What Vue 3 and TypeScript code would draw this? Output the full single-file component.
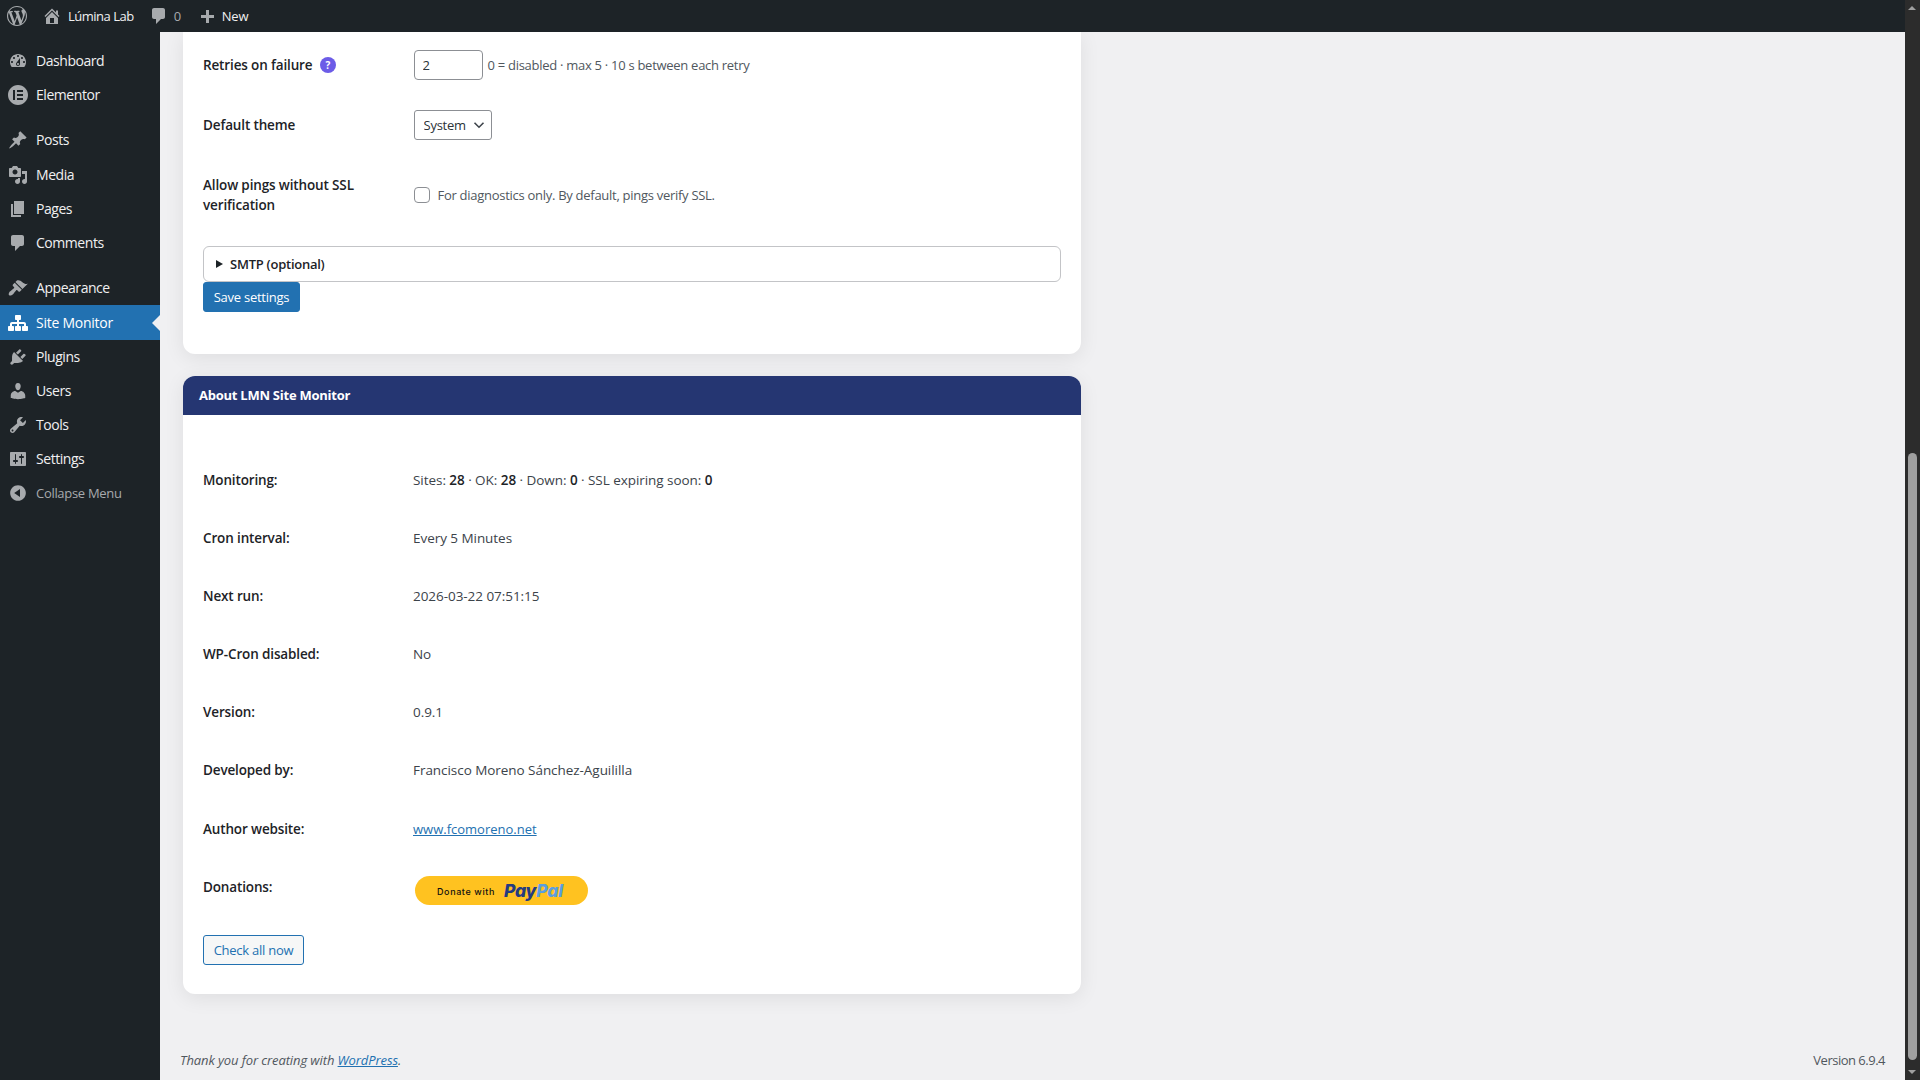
<script setup lang="ts">
interface MenuItem { label: string; d: string; gapBefore?: boolean; current?: boolean; dim?: boolean }

const paths = {
  dashboard: 'M3.76 16h12.48c1.1-1.37 1.76-3.11 1.76-5 0-4.42-3.58-8-8-8s-8 3.58-8 8c0 1.89.66 3.63 1.76 5zM10 4c.55 0 1 .45 1 1s-.45 1-1 1-1-.45-1-1 .45-1 1-1zM6 6c.55 0 1 .45 1 1s-.45 1-1 1-1-.45-1-1 .45-1 1-1zm8 0c.55 0 1 .45 1 1s-.45 1-1 1-1-.45-1-1 .45-1 1-1zm-5.37 5.55L12 7v6c0 1.1-.9 2-2 2s-2-.9-2-2c0-.57.24-1.08.63-1.45zM4 10c.55 0 1 .45 1 1s-.45 1-1 1-1-.45-1-1 .45-1 1-1zm12 0c.55 0 1 .45 1 1s-.45 1-1 1-1-.45-1-1 .45-1 1-1zm-5 3c0-.55-.45-1-1-1s-1 .45-1 1 .45 1 1 1 1-.45 1-1z',
  elementor: 'M10 0C4.478 0 0 4.478 0 10s4.478 10 10 10 10-4.478 10-10S15.522 0 10 0zM7 15H5V5h2v10zm8 0H9v-2h6v2zm0-4H9V9h6v2zm0-4H9V5h6v2z',
  post: 'M10.44 3.02l1.82-1.82 6.36 6.35-1.83 1.82c-1.05-.68-2.48-.57-3.41.36l-.75.75c-.92.93-1.04 2.35-.35 3.41l-1.83 1.82-2.41-2.41-2.8 2.79c-.42.42-3.38 2.71-3.8 2.29s1.86-3.39 2.28-3.81l2.79-2.79L4.1 9.36l1.83-1.82c1.05.69 2.48.57 3.4-.36l.75-.75c.93-.92 1.05-2.35.36-3.41z',
  media: 'M13 11V4c0-.55-.45-1-1-1h-1.67L9 1H5L3.67 3H2c-.55 0-1 .45-1 1v7c0 .55.45 1 1 1h10c.55 0 1-.45 1-1zM7 4.5c1.38 0 2.5 1.12 2.5 2.5S8.38 9.5 7 9.5 4.5 8.38 4.5 7 5.62 4.5 7 4.5zM14 6h5v10.5c0 1.38-1.12 2.5-2.5 2.5S14 17.88 14 16.5s1.12-2.5 2.5-2.5c.17 0 .34.02.5.05V9h-3V6zm-4 8.05V13h2v3.5c0 1.38-1.12 2.5-2.5 2.5S7 17.88 7 16.5 8.12 14 9.5 14c.17 0 .34.02.5.05z',
  page: 'M6 15V2h10v13H6zm-1 1h8v2H3V5h2v11z',
  comment: 'M5 2h9c1.1 0 2 .9 2 2v7c0 1.1-.9 2-2 2h-2l-5 5v-5H5c-1.1 0-2-.9-2-2V4c0-1.1.9-2 2-2z',
  appearance: 'M14.48 11.06L7.41 3.99l1.5-1.5c.5-.56 2.3-.47 3.51.32 1.21.8 1.43 1.28 2.91 2.1 1.18.64 2.45 1.26 4.45.85zm-.71.71L6.7 4.7 4.93 6.47c-.39.39-.39 1.02 0 1.41l1.06 1.06c.39.39.39 1.03 0 1.42-.6.6-1.43 1.11-2.21 1.69-.35.26-.7.53-1.01.84C1.43 13.23.1 15.79 1.1 17.34c1.63.69 3.11-.32 4.45-1.71.3-.31.57-.66.83-1.01.58-.78 1.09-1.61 1.69-2.21.39-.39 1.02-.39 1.41 0l1.06 1.06c.39.39 1.02.39 1.41 0z',
  network: 'M18 13h1c.55 0 1 .45 1 1.01v2.98c0 .56-.45 1.01-1 1.01h-4c-.55 0-1-.45-1-1.01v-2.98c0-.56.45-1.01 1-1.01h1v-2h-5v2h1c.55 0 1 .45 1 1.01v2.98c0 .56-.45 1.01-1 1.01H8c-.55 0-1-.45-1-1.01v-2.98c0-.56.45-1.01 1-1.01h1v-2H4v2h1c.55 0 1 .45 1 1.01v2.98C6 17.55 5.55 18 5 18H1c-.55 0-1-.45-1-1.01v-2.98C0 13.45.45 13 1 13h1v-2c0-1.1.9-2 2-2h5V7H8c-.55 0-1-.45-1-1.01V3.01C7 2.45 7.45 2 8 2h4c.55 0 1 .45 1 1.01v2.98C13 6.55 12.55 7 12 7h-1v2h5c1.1 0 2 .9 2 2v2z',
  plugins: 'M13.11 4.36L9.87 7.6 8 5.73l3.24-3.24c.35-.34 1.05-.2 1.56.32.52.51.66 1.21.31 1.55zm-8 1.77l.91-1.12 9.01 9.01-1.19.84c-.71.71-2.63 1.16-3.82 1.16H6.14L4.9 17.26c-.59.59-1.54.59-2.12 0-.59-.58-.59-1.53 0-2.12l1.24-1.24v-3.88c0-1.13.4-3.19 1.09-3.89zm7.26 3.97l3.24-3.24c.34-.35 1.04-.21 1.55.31.52.51.66 1.21.31 1.55l-3.24 3.25z',
  users: 'M10 9.25c-2.27 0-2.73-3.44-2.73-3.44C7 4.02 7.82 2 9.97 2c2.16 0 2.98 2.02 2.71 3.81 0 0-.41 3.44-2.68 3.44zm0 2.57L12.72 10c2.39 0 4.52 2.33 4.52 4.53v2.49s-3.65 1.13-7.24 1.13c-3.65 0-7.24-1.13-7.24-1.13v-2.49c0-2.25 1.94-4.48 4.47-4.48z',
  tools: 'M16.68 9.77c-1.34 1.34-3.3 1.67-4.95.99l-5.41 6.52c-.99.99-2.59.99-3.58 0s-.99-2.59 0-3.57l6.52-5.42c-.68-1.65-.35-3.61.99-4.95 1.28-1.28 3.12-1.62 4.72-1.06l-2.89 2.89 2.82 2.82 2.86-2.87c.53 1.58.18 3.39-1.08 4.65zM3.81 16.21c.4.39 1.04.39 1.43 0 .4-.4.4-1.04 0-1.43-.39-.4-1.03-.4-1.43 0-.39.39-.39 1.03 0 1.43z',
  settings: 'M18 16V4c0-.55-.45-1-1-1H3c-.55 0-1 .45-1 1v12c0 .55.45 1 1 1h14c.55 0 1-.45 1-1zM8 11h1c.55 0 1 .45 1 1s-.45 1-1 1H8v1.5c0 .28-.22.5-.5.5s-.5-.22-.5-.5V13H6c-.55 0-1-.45-1-1s.45-1 1-1h1V5.5c0-.28.22-.5.5-.5s.5.22.5.5V11zm5-2h-1c-.55 0-1-.45-1-1s.45-1 1-1h1V5.5c0-.28.22-.5.5-.5s.5.22.5.5V7h1c.55 0 1 .45 1 1s-.45 1-1 1h-1v5.5c0 .28-.22.5-.5.5s-.5-.22-.5-.5V9z',
  collapse: 'M10 2.16c4.33 0 7.84 3.51 7.84 7.84s-3.51 7.84-7.84 7.84S2.16 14.33 2.16 10 5.71 2.16 10 2.16zm2 11.72V6.12L6.18 9.97z',
  home: 'M16 8.5l1.53 1.53-1.06 1.06L10 4.62l-6.47 6.47-1.06-1.06L10 2.5l4 4v-2h2v4zm-6-2.46l6 5.99V18H4v-5.97zM12 17v-5H8v5h4z',
  plus: 'M17 9v3h-5v5H9v-5H4V9h5V4h3v5h5z',
  wp: 'M20 10c0-5.51-4.49-10-10-10C4.48 0 0 4.49 0 10c0 5.52 4.48 10 10 10 5.51 0 10-4.48 10-10zM7.78 15.37L4.37 6.22c.55-.02 1.17-.08 1.17-.08.5-.06.44-1.13-.06-1.11 0 0-1.45.11-2.37.11-.18 0-.37 0-.58-.01C4.12 2.69 6.87 1.11 10 1.11c2.33 0 4.45.87 6.05 2.34-.68-.11-1.65.39-1.65 1.58 0 .74.45 1.36.9 2.1.35.61.55 1.36.55 2.46 0 1.49-1.4 5-1.4 5l-3.03-8.37c.54-.02.82-.17.82-.17.5-.05.44-1.25-.06-1.22 0 0-1.44.12-2.38.12-.87 0-2.33-.12-2.33-.12-.5-.03-.56 1.2-.06 1.22l.92.08 1.26 3.41zM17.41 10c.24-.64.74-1.87.43-4.25.7 1.29 1.05 2.71 1.05 4.25 0 3.29-1.73 6.24-4.4 7.78.97-2.59 1.94-5.2 2.92-7.78zM6.1 18.09C3.12 16.65 1.11 13.53 1.11 10c0-1.3.23-2.48.72-3.59C3.25 10.3 4.67 14.2 6.1 18.09zm4.03-6.63l2.58 6.98c-.86.29-1.76.45-2.71.45-.79 0-1.57-.11-2.29-.33.81-2.38 1.62-4.74 2.42-7.1z',
};

const menu: MenuItem[] = [
  { label: 'Dashboard', d: paths.dashboard },
  { label: 'Elementor', d: paths.elementor },
  { label: 'Posts', d: paths.post, gapBefore: true },
  { label: 'Media', d: paths.media },
  { label: 'Pages', d: paths.page },
  { label: 'Comments', d: paths.comment },
  { label: 'Appearance', d: paths.appearance, gapBefore: true },
  { label: 'Site Monitor', d: paths.network, current: true },
  { label: 'Plugins', d: paths.plugins },
  { label: 'Users', d: paths.users },
  { label: 'Tools', d: paths.tools },
  { label: 'Settings', d: paths.settings },
  { label: 'Collapse Menu', d: paths.collapse, dim: true },
];

const about: { label: string; value: string }[] = [
  { label: 'Cron interval:', value: 'Every 5 Minutes' },
  { label: 'Next run:', value: '2026-03-22 07:51:15' },
  { label: 'WP-Cron disabled:', value: 'No' },
  { label: 'Version:', value: '0.9.1' },
  { label: 'Developed by:', value: 'Francisco Moreno Sánchez-Aguililla' },
];
</script>

<template>
  <div class="screen">
    <div class="page">
      <header class="adminbar">
        <svg class="bar-icon wp" viewBox="0 0 20 20"><path :d="paths.wp" /></svg>
        <svg class="bar-icon home" viewBox="0 0 20 20"><path :d="paths.home" /></svg>
        <span class="bar-text site">Lúmina Lab</span>
        <svg class="bar-icon bubble" viewBox="0 0 20 20"><path :d="paths.comment" /></svg>
        <span class="bar-count">0</span>
        <svg class="bar-icon plus" viewBox="0 0 20 20"><path :d="paths.plus" /></svg>
        <span class="bar-text">New</span>
      </header>
      <div class="body">
        <nav class="sidebar">
          <a
            v-for="item in menu"
            :key="item.label"
            class="menu-item"
            :class="{ gap: item.gapBefore, current: item.current, dim: item.dim }"
          >
            <svg class="menu-icon" viewBox="0 0 20 20"><path :d="item.d" /></svg>
            <span>{{ item.label }}</span>
          </a>
        </nav>
        <main class="main">
          <section class="card first">
            <div class="row">
              <div class="label with-help">Retries on failure <span class="help">?</span></div>
              <div class="control">
                <input class="num" type="number" value="2" />
                <span class="hint">0 = disabled · max 5 · 10 s between each retry</span>
              </div>
            </div>
            <div class="row">
              <div class="label">Default theme</div>
              <div class="control">
                <div class="select-wrap">
                  <select class="select"><option>System</option></select>
                  <svg class="chevron" viewBox="0 0 12 8"><path d="M1.5 1.8 6 6.2l4.5-4.4" /></svg>
                </div>
              </div>
            </div>
            <div class="row tall">
              <div class="label">Allow pings without SSL verification</div>
              <div class="control">
                <input class="check" type="checkbox" />
                <span class="hint diag">For diagnostics only. By default, pings verify SSL.</span>
              </div>
            </div>
            <details class="smtp">
              <summary class="smtp-head"><i class="tri"></i>SMTP (optional)</summary>
            </details>
            <button class="btn-primary" type="button">Save settings</button>
          </section>

          <section class="card second">
            <h2 class="card-title">About LMN Site Monitor</h2>
            <div class="about">
              <div class="about-row">
                <div class="label">Monitoring:</div>
                <div class="value">Sites: <b>28</b> · OK: <b>28</b> · Down: <b>0</b> · SSL expiring soon: <b>0</b></div>
              </div>
              <div v-for="r in about" :key="r.label" class="about-row">
                <div class="label">{{ r.label }}</div>
                <div class="value">{{ r.value }}</div>
              </div>
              <div class="about-row website">
                <div class="label">Author website:</div>
                <div class="value"><a class="link site-link">www.fcomoreno.net</a></div>
              </div>
              <div class="about-row donate">
                <div class="label">Donations:</div>
                <div class="value">
                  <a class="paypal"><span class="pp-donate">Donate with</span><span class="pp-logo"><span class="pp-a">Pay</span><span class="pp-b">Pal</span></span></a>
                </div>
              </div>
              <button class="btn-secondary" type="button">Check all now</button>
            </div>
          </section>

          <footer class="footer">
            <span class="thanks">Thank you for creating with <a class="link">WordPress</a>.</span>
            <span class="version">Version 6.9.4</span>
          </footer>
        </main>
      </div>
    </div>
    <div class="scrollbar">
      <i class="arrow up"></i>
      <div class="thumb"></div>
      <i class="arrow down"></i>
    </div>
  </div>
</template>

<style>
html, body { margin: 0; padding: 0; overflow: hidden; }
</style>

<style scoped>
* { box-sizing: border-box; }
.screen {
  width: 1920px;
  height: 1080px;
  display: flex;
  overflow: hidden;
  background: #f0f0f2;
  font-family: "Open Sans", "Noto Sans", sans-serif;
  font-size: 13px;
  line-height: 20px;
  letter-spacing: -0.25px;
  color: #3c434a;
}
.page { flex: 1; min-width: 0; display: flex; flex-direction: column; }
.adminbar {
  height: 32px;
  flex: none;
  background: #1d2327;
  display: flex;
  align-items: center;
  color: #f0f0f1;
}
.bar-icon { fill: #a7aaad; flex: none; }
.wp { width: 20px; height: 20px; margin-left: 7px; }
.home { width: 20px; height: 20px; margin-left: 15px; }
.site { margin-left: 6px; letter-spacing: -0.5px; }
.bubble { width: 20px; height: 20px; margin-left: 15px; }
.bar-count { color: #a7aaad; margin-left: 5px; }
.plus { width: 20px; height: 20px; margin-left: 16px; }
.plus + .bar-text { margin-left: 5px; }
.body { flex: 1; display: flex; min-height: 0; }
.sidebar {
  width: 160px;
  flex: none;
  background: #1d2327;
  padding-top: 12px;
  display: flex;
  flex-direction: column;
}
.menu-item {
  height: 34px;
  display: flex;
  align-items: center;
  padding-left: 8px;
  color: #f0f0f1;
  font-size: 14px;
  letter-spacing: -0.45px;
  position: relative;
}
.menu-item.gap { margin-top: 11px; }
.menu-item:nth-child(4) { margin-top: 1px; }
.menu-icon { width: 20px; height: 20px; fill: #a7aaad; margin-right: 8px; flex: none; }
.menu-item.current { background: #2271b1; color: #fff; height: 35px; letter-spacing: -0.25px; }
.menu-item.current .menu-icon { fill: #fff; }
.menu-item.current::after {
  content: "";
  position: absolute;
  right: 0;
  top: 50%;
  margin-top: -8px;
  border: 8px solid transparent;
  border-right-color: #f0f0f2;
}
.menu-item.dim { color: #a7aaad; font-size: 13px; letter-spacing: -0.3px; }
.main {
  flex: 1;
  min-width: 0;
  display: flex;
  flex-direction: column;
  padding: 0 20px;
  height: 1048px;
  overflow: hidden;
}
.card {
  width: 898px;
  margin-left: 3px;
  background: #fff;
  box-shadow: 0 4px 20px rgba(0, 0, 0, 0.08);
  flex: none;
}
.first {
  height: 322px;
  padding: 3px 20px 0;
  border-radius: 0 0 12px 12px;
}
.row {
  display: grid;
  grid-template-columns: 210.5px 1fr;
  align-items: center;
  height: 60px;
}
.row.tall { height: 80px; margin-bottom: 11px; }
.label { color: #1d2327; font-weight: 600; font-size: 13.5px; letter-spacing: -0.14px; padding-right: 30px; }
.with-help { display: flex; align-items: center; white-space: pre; }
.help {
  display: inline-flex;
  width: 16px;
  height: 16px;
  margin-left: 4px;
  border-radius: 50%;
  align-items: center;
  justify-content: center;
  background: #6c5ce7;
  color: #fff;
  font-size: 10px;
  font-weight: 700;
  letter-spacing: 0;
}
.control { display: flex; align-items: center; }
.num {
  width: 69px;
  height: 30px;
  border: 1px solid #8c8f94;
  border-radius: 4px;
  background: #fff;
  padding: 0 8px;
  font: inherit;
  letter-spacing: inherit;
  color: #2c3338;
  appearance: textfield;
}
.hint { margin-left: 5px; color: #50575e; font-size: 13px; letter-spacing: -0.28px; }
.diag { margin-left: 8px; }
.select-wrap { position: relative; width: 78px; height: 30px; }
.select {
  width: 100%;
  height: 100%;
  appearance: none;
  border: 1px solid #8c8f94;
  border-radius: 3px;
  background: #fff;
  padding: 0 0 0 9px;
  font: inherit;
  letter-spacing: inherit;
  color: #2c3338;
}
.chevron {
  position: absolute;
  right: 7px;
  top: 11px;
  width: 12px;
  height: 8px;
  fill: none;
  stroke: #3c434a;
  stroke-width: 1.6;
  pointer-events: none;
}
.check {
  appearance: none;
  width: 16px;
  height: 16px;
  margin: 0;
  border: 1px solid #8c8f94;
  border-radius: 4px;
  background: #fff;
}
.smtp {
  height: 36px;
  border: 1px solid #c3c4c7;
  border-radius: 6px;
  background: #fff;
}
.smtp-head {
  list-style: none;
  height: 34px;
  display: flex;
  align-items: center;
  padding-left: 12px;
  color: #1d2327;
  font-weight: 600;
}
.smtp-head::-webkit-details-marker { display: none; }
.tri {
  width: 0;
  height: 0;
  border-style: solid;
  border-width: 4px 0 4px 7px;
  border-color: transparent transparent transparent #1d2327;
  margin-right: 7px;
}
.btn-primary {
  display: block;
  width: 97px;
  height: 30px;
  padding: 0;
  border: 1px solid #2271b1;
  border-radius: 3px;
  background: #2271b1;
  color: #fff;
  font: inherit;
  letter-spacing: inherit;
}
.second { margin-top: 22px; height: 618px; border-radius: 12px; }
.card-title {
  margin: 0;
  height: 39px;
  padding: 0 0 1px 16px;
  display: flex;
  align-items: center;
  background: #253672;
  border-radius: 12px 12px 0 0;
  color: #fff;
  font-size: 13px;
  font-weight: 700;
}
.about { padding: 36px 20px 0; }
.about-row {
  display: grid;
  grid-template-columns: 210px 1fr;
  align-items: center;
  height: 58px;
}
.website { margin-top: 1px; }
.value { color: #3c434a; font-size: 13.5px; letter-spacing: -0.05px; }
.value b { font-weight: 600; color: #1d2327; }
.link { color: #2271b1; text-decoration: underline; }
.site-link { font-size: 13px; letter-spacing: 0; }
.donate { height: 62px; align-items: start; padding-top: 19px; }
.paypal {
  display: flex;
  align-items: center;
  width: 173px;
  height: 29px;
  margin: -1px 0 0 2px;
  border-radius: 15px;
  background: #ffc220;
  padding-left: 22px;
  color: #111;
}
.pp-donate {
  font-family: Inter, "Open Sans", sans-serif;
  font-size: 9px;
  font-weight: 500;
  letter-spacing: 0.6px;
  line-height: 12px;
  margin-top: 2px;
  white-space: nowrap;
}
.pp-logo {
  margin-left: 9px;
  font-family: Inter, "Liberation Sans", sans-serif;
  font-style: italic;
  font-weight: 800;
  font-size: 17.5px;
  letter-spacing: -0.2px;
  line-height: 20px;
}
.pp-a { color: #253b80; }
.pp-b { color: #5b9ee0; }
.btn-secondary {
  display: block;
  margin-top: 15px;
  width: 101px;
  height: 30px;
  padding: 0;
  border: 1px solid #2271b1;
  border-radius: 3px;
  background: #f6f7f7;
  color: #2271b1;
  font: inherit;
  letter-spacing: inherit;
}
.footer {
  margin-top: auto;
  height: 30px;
  padding-bottom: 10px;
  display: flex;
  justify-content: space-between;
  align-items: center;
  color: #50575e;
}
.thanks { font-style: italic; letter-spacing: -0.1px; }
.version { letter-spacing: -0.5px; }
.scrollbar {
  width: 15px;
  flex: none;
  background: #2c2c2c;
  position: relative;
  padding: 453px 3px 0;
}
.thumb { height: 607px; border-radius: 5px; background: #9f9f9f; }
.arrow { position: absolute; left: 3px; width: 0; height: 0; border-style: solid; border-color: transparent; }
.up { top: 6px; border-width: 0 4.5px 4px; border-bottom-color: #9f9f9f; }
.down { bottom: 6px; border-width: 4px 4.5px 0; border-top-color: #9f9f9f; }
</style>
